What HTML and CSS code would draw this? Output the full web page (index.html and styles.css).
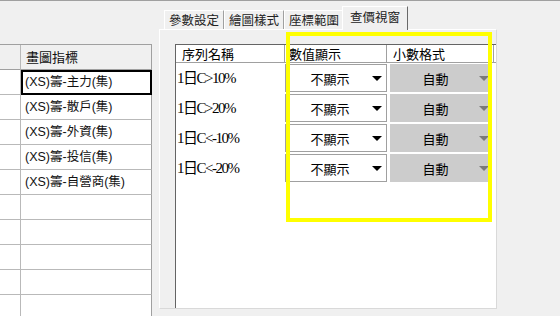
FILE: index.html
```html
<!DOCTYPE html>
<html lang="zh-Hant">
<head>
  <meta charset="UTF-8" />
  <title>查價視窗</title>
  <link rel="stylesheet" href="styles.css">
</head>
<body>
  <div class="app">
    <div class="grid">
      <div class="grid-row head">
        <div class="cell"></div>
        <div class="cell">畫圖指標</div>
      </div>
      <div class="grid-row">
        <div class="cell"></div>
        <div class="cell sel">(XS)籌-主力(集)</div>
      </div>
      <div class="grid-row">
        <div class="cell"></div>
        <div class="cell">(XS)籌-散戶(集)</div>
      </div>
      <div class="grid-row">
        <div class="cell"></div>
        <div class="cell">(XS)籌-外資(集)</div>
      </div>
      <div class="grid-row">
        <div class="cell"></div>
        <div class="cell">(XS)籌-投信(集)</div>
      </div>
      <div class="grid-row">
        <div class="cell"></div>
        <div class="cell">(XS)籌-自營商(集)</div>
      </div>
      <div class="grid-row"><div class="cell"></div><div class="cell"></div></div>
      <div class="grid-row"><div class="cell"></div><div class="cell"></div></div>
      <div class="grid-row"><div class="cell"></div><div class="cell"></div></div>
      <div class="grid-row"><div class="cell"></div><div class="cell"></div></div>
      <div class="grid-row"><div class="cell"></div><div class="cell"></div></div>
    </div>

    <div class="tabctl">
      <div class="tabs">
        <div class="tab">參數設定</div>
        <div class="tab">繪圖樣式</div>
        <div class="tab">座標範圍</div>
        <div class="tab active">查價視窗</div>
      </div>
      <div class="panel">
        <div class="list">
          <div class="list-head">
            <div class="hcell c1">序列名稱</div>
            <div class="hcell c2">數值顯示</div>
            <div class="hcell c3">小數格式</div>
          </div>
          <div class="list-row">
            <div class="label">1日C&gt;10%</div>
            <div class="combo"><span>不顯示</span><i class="arrow"></i></div>
            <div class="combo off"><span>自動</span><i class="arrow"></i></div>
          </div>
          <div class="list-row">
            <div class="label">1日C&gt;20%</div>
            <div class="combo"><span>不顯示</span><i class="arrow"></i></div>
            <div class="combo off"><span>自動</span><i class="arrow"></i></div>
          </div>
          <div class="list-row">
            <div class="label">1日C&lt;-10%</div>
            <div class="combo"><span>不顯示</span><i class="arrow"></i></div>
            <div class="combo off"><span>自動</span><i class="arrow"></i></div>
          </div>
          <div class="list-row">
            <div class="label">1日C&lt;-20%</div>
            <div class="combo"><span>不顯示</span><i class="arrow"></i></div>
            <div class="combo off"><span>自動</span><i class="arrow"></i></div>
          </div>
        </div>
      </div>
    </div>

    <div class="mark"></div>
  </div>
</body>
</html>
```

FILE: styles.css
```css
body {
  margin: 0;
  background: #f0f0f0;
  color: #000;
  font-family: "Noto Sans CJK TC", sans-serif;
  font-size: 13px;
}

.app {
  position: relative;
  display: flex;
  gap: 7px;
  width: 560px;
  height: 316px;
  overflow: hidden;
  border-top: 1px solid #a0a0a0;
  box-sizing: border-box;
}

/* left grid */
.grid {
  width: 152px;
  margin-top: 43px;
  border-top: 1px solid #a0a0a0;
}

.grid-row {
  display: grid;
  grid-template-columns: 21px 131px;
  height: 25px;
}

.cell {
  background: white;
  border-right: 1px solid #a0a0a0;
  border-bottom: 1px solid #b9b9b9;
  padding-left: 4px;
  font-family: "Liberation Sans", "Noto Sans CJK TC", sans-serif;
  font-size: 12.5px;
  line-height: 24px;
  color: #111;
  white-space: nowrap;
  overflow: hidden;
}

.grid-row .cell:first-child {
  border-right-color: #b9b9b9;
}

.head .cell {
  background: #f0f0f0;
  border-bottom-color: #a0a0a0;
  font-family: "Noto Sans CJK TC", sans-serif;
  font-size: 13px;
  padding-left: 5px;
}

.cell.sel {
  outline: 2px solid #000;
  outline-offset: -2px;
}

/* tab control */
.tabctl {
  width: 338px;
  display: flex;
  flex-direction: column;
}

.tabs {
  display: flex;
  align-items: flex-end;
  height: 28px;
  padding-left: 5px;
}

.tab {
  width: 60px;
  height: 19px;
  line-height: 18px;
  font-size: 12.5px;
  text-align: center;
  white-space: nowrap;
  border-top: 1px solid #fff;
  border-left: 1px solid #fff;
  border-right: 1px solid #a0a0a0;
  box-sizing: border-box;
  color: #222;
}

.tab.active {
  position: relative;
  z-index: 1;
  width: 66px;
  height: 24px;
  margin: 0 -2px -1px -2px;
  line-height: 20px;
  background: #f0f0f0;
  border-right-color: #696969;
}

.panel {
  height: 280px;
  border-top: 1px solid #fff;
  border-left: 1px solid #fff;
  border-right: 1px solid #d9d9d9;
  border-bottom: 1px solid #d9d9d9;
  padding: 14px 0 0 15px;
  box-sizing: border-box;
}

.list {
  height: 100%;
  background: white;
  border-top: 1px solid #646464;
  border-left: 1px solid #646464;
  box-sizing: border-box;
}

.list-head {
  display: grid;
  grid-template-columns: 109px 102px 107px;
  height: 18px;
  border-bottom: 1px solid #a0a0a0;
  box-sizing: border-box;
}

.hcell {
  border-right: 1px solid #a0a0a0;
  line-height: 17px;
  font-size: 13px;
  padding-left: 6px;
}

.hcell.c2 {
  padding-left: 4px;
}

.list-row {
  display: grid;
  grid-template-columns: 109px 102px 107px;
  height: 30px;
}

.label {
  padding-left: 1px;
  line-height: 30px;
  font-family: "Liberation Serif", "Noto Sans CJK TC", serif;
  font-size: 15px;
  letter-spacing: -1.5px;
  white-space: nowrap;
}

.combo {
  display: flex;
  align-items: center;
  height: 28px;
  margin-top: 1px;
  background: white;
  border: 1px solid #a0a0a0;
  box-sizing: border-box;
}

.combo span {
  flex: 1;
  text-align: center;
  padding-left: 2px;
}

.combo .arrow {
  width: 0;
  height: 0;
  border-left: 5px solid transparent;
  border-right: 5px solid transparent;
  border-top: 5px solid #000;
  margin-right: 4px;
}

.combo.off {
  margin-left: 3px;
  margin-right: 3px;
  background: #cccccc;
  border: none;
}

.combo.off .arrow {
  border-top-color: #7a7a7a;
  margin-right: 2px;
}

/* highlight box */
.mark {
  position: absolute;
  left: 286px;
  top: 31px;
  width: 206px;
  height: 190px;
  border: 4px solid #ffff00;
  box-sizing: border-box;
}
```
